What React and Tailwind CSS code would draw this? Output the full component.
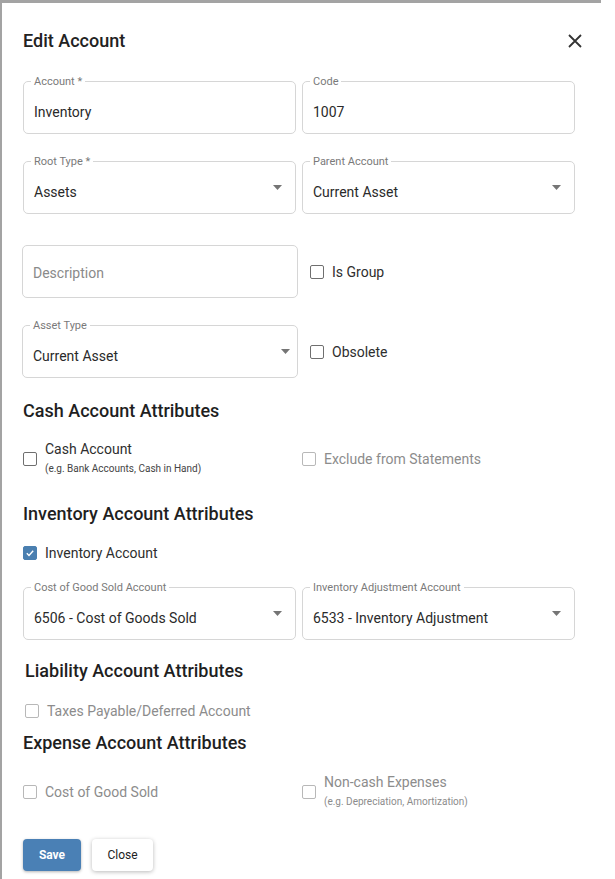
import { useState } from 'react';

const font = { fontFamily: 'Roboto, "Noto Sans", Arial, sans-serif' };

function Caret() {
  return (
    <svg width="9" height="5" viewBox="0 0 9 5" className="shrink-0">
      <path d="M0 0h9L4.5 5z" fill="#757575" />
    </svg>
  );
}

function Field({ label, value, placeholder, select, width = 'w-full', caretGap = 'pr-[13px]' }) {
  return (
    <div className={`relative ${width} h-[53px] border border-[#d6d6d6] rounded-[5px] flex items-center pl-[10px] ${caretGap}`}>
      {label && (
        <span className="absolute -top-[7px] left-[7px] bg-white px-[3px] text-[11px] leading-[13px] text-[#7a7a7a]">
          {label}
        </span>
      )}
      <div className={`flex-1 ${label ? 'pt-[9px]' : 'pt-[2px]'} text-[14px] leading-[20px] ${value ? 'text-[#2a2a2a]' : 'text-[#8a8a8a]'}`}>
        {value || placeholder}
      </div>
      {select && <Caret />}
    </div>
  );
}

function Box({ checked, disabled, onClick }) {
  return (
    <span
      onClick={onClick}
      className={`w-[14px] h-[14px] shrink-0 rounded-[2px] flex items-center justify-center ${
        checked ? 'bg-[#4a7fb0] border border-[#4a7fb0]' : disabled ? 'border border-[#b8b8b8] bg-white' : 'border border-[#6f6f6f] bg-white'
      }`}
    >
      {checked && (
        <svg width="10" height="10" viewBox="0 0 10 10">
          <path d="M1.8 5.2l2.2 2.2 4.2-4.6" fill="none" stroke="#fff" strokeWidth="1.4" />
        </svg>
      )}
    </span>
  );
}

function Check({ label, sub, checked, disabled, onToggle }) {
  return (
    <div className="flex items-center gap-[8px]">
      <Box checked={checked} disabled={disabled} onClick={onToggle} />
      <div className="flex flex-col">
        <span className={`text-[14px] ${sub ? 'leading-[18px]' : 'leading-[20px]'} ${disabled ? 'text-[#8c8c8c]' : 'text-[#2e2e2e]'}`}>
          {label}
        </span>
        {sub && (
          <span className={`mt-[3px] text-[10px] leading-[16px] ${disabled ? 'text-[#8c8c8c]' : 'text-[#444]'}`}>{sub}</span>
        )}
      </div>
    </div>
  );
}

function Heading({ children, className = '' }) {
  return <h2 className={`text-[18px] leading-[24px] font-medium text-[#1f1f1f] ${className}`}>{children}</h2>;
}

export default function App() {
  const [isGroup, setIsGroup] = useState(false);
  const [obsolete, setObsolete] = useState(false);
  const [cash, setCash] = useState(false);
  const [inventory, setInventory] = useState(true);

  return (
    <div className="min-h-screen bg-white" style={font}>
      <div className="w-[601px] h-[879px] border-t-[3px] border-l-[2px] border-[#a3a3a3] bg-white">
        <div className="flex items-center justify-between pt-[25px] pl-[21px] pr-[19px]">
          <h1 className="text-[18px] leading-[26px] font-medium text-[#222]">Edit Account</h1>
          <button className="w-[14px] h-[14px]">
            <svg width="14" height="14" viewBox="0 0 14 14">
              <path d="M1 1l12 12M13 1L1 13" stroke="#333" strokeWidth="1.8" />
            </svg>
          </button>
        </div>

        <div className="pl-[21px] flex flex-col">
          <div className="mt-[27px] grid grid-cols-[273px_273px] gap-x-[6px]">
            <Field label="Account *" value="Inventory" />
            <Field label="Code" value="1007" />
          </div>
          <div className="mt-[27px] grid grid-cols-[273px_273px] gap-x-[6px]">
            <Field label="Root Type *" value="Assets" select />
            <Field label="Parent Account" value="Current Asset" select />
          </div>
          <div className="mt-[31px] -ml-[1px] flex items-center gap-[12px]">
            <Field placeholder="Description" width="w-[276px]" />
            <Check label="Is Group" checked={isGroup} onToggle={() => setIsGroup(!isGroup)} />
          </div>
          <div className="mt-[27px] -ml-[1px] flex items-center gap-[12px]">
            <Field label="Asset Type" value="Current Asset" select width="w-[276px]" caretGap="pr-[7px]" />
            <Check label="Obsolete" checked={obsolete} onToggle={() => setObsolete(!obsolete)} />
          </div>

          <Heading className="mt-[21px]">Cash Account Attributes</Heading>
          <div className="mt-[17px] grid grid-cols-[279px_273px] items-center">
            <Check
              label="Cash Account"
              sub="(e.g. Bank Accounts, Cash in Hand)"
              checked={cash}
              onToggle={() => setCash(!cash)}
            />
            <Check label="Exclude from Statements" disabled />
          </div>

          <Heading className="mt-[25px]">Inventory Account Attributes</Heading>
          <div className="mt-[17px]">
            <Check label="Inventory Account" checked={inventory} onToggle={() => setInventory(!inventory)} />
          </div>
          <div className="mt-[24px] grid grid-cols-[273px_273px] gap-x-[6px]">
            <Field label="Cost of Good Sold Account" value="6506 - Cost of Goods Sold" select />
            <Field label="Inventory Adjustment Account" value="6533 - Inventory Adjustment" select />
          </div>

          <Heading className="mt-[19px] ml-[2px]">Liability Account Attributes</Heading>
          <div className="mt-[18px] ml-[2px]">
            <Check label="Taxes Payable/Deferred Account" disabled />
          </div>

          <Heading className="mt-[10px]">Expense Account Attributes</Heading>
          <div className="mt-[18px] grid grid-cols-[279px_273px] items-center">
            <Check label="Cost of Good Sold" disabled />
            <Check label="Non-cash Expenses" sub="(e.g. Depreciation, Amortization)" disabled />
          </div>

          <div className="mt-[29px] flex gap-[11px]">
            <button className="w-[58px] h-[32px] rounded-[4px] bg-[#4a80b5] text-white text-[12px] font-bold shadow-[0_1px_3px_rgba(0,0,0,0.3)]">
              Save
            </button>
            <button className="w-[61px] h-[32px] rounded-[4px] bg-white text-[#222] text-[12px] shadow-[0_1px_4px_rgba(0,0,0,0.28)]">
              Close
            </button>
          </div>
        </div>
      </div>
    </div>
  );
}
